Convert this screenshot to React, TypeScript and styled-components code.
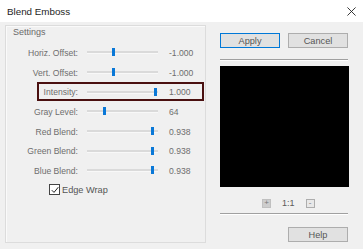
import React from "react";
import styled, { createGlobalStyle } from "styled-components";

const GlobalStyle = createGlobalStyle`
  html, body {
    margin: 0;
    padding: 0;
    background: #f0f0f0;
  }
  body {
    font-family: "Liberation Sans", Arial, sans-serif;
  }
`;

const Window = styled.div`
  width: 363px;
  height: 249px;
  background: #f0f0f0;
  overflow: hidden;
`;

const TitleBar = styled.div`
  height: 22px;
  background: #ffffff;
  display: flex;
  align-items: center;
  justify-content: space-between;
  padding: 0 7px;
  font-size: 9.8px;
  color: #1e1e1e;
`;

const CloseIcon = styled.svg`
  width: 9px;
  height: 9px;
`;

const Body = styled.div`
  display: flex;
  align-items: flex-start;
  padding-left: 5px;
`;

const GroupBox = styled.div`
  margin-top: 3px;
  width: 199px;
  height: 216px;
  border: 1px solid #dcdcdc;
  box-shadow: inset 1px 1px 0 #fafafa;
`;

const Caption = styled.div`
  width: fit-content;
  margin: 1px 0 0 6px;
  padding: 0 1px;
  font-size: 9px;
  color: #6a6a6a;
`;

const Rows = styled.div`
  margin-top: 6px;
  display: flex;
  flex-direction: column;
`;

const Row = styled.div<{ $highlight?: boolean }>`
  position: relative;
  height: 19.7px;
  display: grid;
  grid-template-columns: 72px 80px 1fr;
  align-items: center;
  font-size: 8.6px;
  color: #6e6e6e;

  ${(p) =>
    p.$highlight &&
    `
    &::after {
      content: "";
      position: absolute;
      left: 31px;
      right: 1px;
      top: 0;
      bottom: 1px;
      border: 2px solid #4a1010;
    }
  `}
`;

const Label = styled.span`
  text-align: right;
  white-space: nowrap;
`;

const Track = styled.div`
  position: relative;
  margin-left: 9px;
  width: 71px;
  height: 2px;
  background: #dadada;
  border-bottom: 1px solid #f8f8f8;
`;

const Thumb = styled.div`
  position: absolute;
  top: -3px;
  width: 3px;
  height: 8px;
  background: #0a78d7;
`;

const Value = styled.span`
  padding-left: 11px;
`;

const CheckRow = styled.label`
  display: flex;
  align-items: center;
  gap: 2px;
  height: 18px;
  margin-left: 43px;
  font-size: 9.2px;
  color: #555;
`;

const Box = styled.span`
  width: 9px;
  height: 9px;
  border: 1px solid #444;
  background: #fff;
  display: flex;
  align-items: center;
  justify-content: center;
`;

const Side = styled.div`
  margin-left: 14px;
  padding-top: 11px;
  width: 129px;
  display: flex;
  flex-direction: column;
`;

const ButtonRow = styled.div`
  display: flex;
  gap: 8px;
`;

const Button = styled.button<{ $default?: boolean }>`
  width: 60px;
  height: 15px;
  padding: 0;
  font-family: inherit;
  font-size: 9.2px;
  color: #555;
  background: #e1e1e1;
  border: 1px solid ${(p) => (p.$default ? "#0078d7" : "#adadad")};
`;

const Separator = styled.div<{ $top: number; $width: number }>`
  margin-top: ${(p) => p.$top}px;
  width: ${(p) => p.$width}px;
  height: 1px;
  background: #a0a0a0;
  border-bottom: 1px solid #ffffff;
`;

const Preview = styled.div`
  margin-top: 5px;
  height: 121px;
  background: #000;
`;

const ZoomRow = styled.div`
  margin-top: 11px;
  margin-left: 42px;
  display: flex;
  align-items: center;
  gap: 11px;
  font-size: 9px;
  color: #5a5a5a;
`;

const ZoomButton = styled.span<{ $filled?: boolean }>`
  width: 9px;
  height: 9px;
  box-sizing: border-box;
  display: flex;
  align-items: center;
  justify-content: center;
  font-size: 8px;
  line-height: 1;
  color: #777;
  background: ${(p) => (p.$filled ? "#cdcdcd" : "#e8e8e8")};
  border: 1px solid ${(p) => (p.$filled ? "#c0c0c0" : "#adadad")};
`;

const HelpRow = styled.div`
  margin-top: 12px;
  display: flex;
  justify-content: flex-end;
  padding-right: 1px;
`;

type Setting = {
  label: string;
  value: string;
  pos: number;
  highlight?: boolean;
};

const settings: Setting[] = [
  { label: "Horiz. Offset:", value: "-1.000", pos: 0.38 },
  { label: "Vert. Offset:", value: "-1.000", pos: 0.38 },
  { label: "Intensity:", value: "1.000", pos: 0.96, highlight: true },
  { label: "Gray Level:", value: "64", pos: 0.25 },
  { label: "Red Blend:", value: "0.938", pos: 0.92 },
  { label: "Green Blend:", value: "0.938", pos: 0.92 },
  { label: "Blue Blend:", value: "0.938", pos: 0.92 },
];

const App = () => {
  return (
    <Window>
      <GlobalStyle />
      <TitleBar>
        <span>Blend Emboss</span>
        <CloseIcon viewBox="0 0 10 10">
          <path d="M0.5 0.5 L9.5 9.5 M9.5 0.5 L0.5 9.5" stroke="#222" strokeWidth="1" />
        </CloseIcon>
      </TitleBar>
      <Body>
        <GroupBox>
          <Caption>Settings</Caption>
          <Rows>
            {settings.map((s) => (
              <Row key={s.label} $highlight={s.highlight}>
                <Label>{s.label}</Label>
                <Track>
                  <Thumb style={{ left: `${s.pos * 71 - 1.5}px` }} />
                </Track>
                <Value>{s.value}</Value>
              </Row>
            ))}
            <CheckRow>
              <Box>
                <svg width="8" height="8" viewBox="0 0 8 8">
                  <path d="M0.8 4.2 L3 6.4 L7.3 1.2" fill="none" stroke="#222" strokeWidth="1" />
                </svg>
              </Box>
              Edge Wrap
            </CheckRow>
          </Rows>
        </GroupBox>
        <Side>
          <ButtonRow>
            <Button $default>Apply</Button>
            <Button>Cancel</Button>
          </ButtonRow>
          <Separator $top={11} $width={128} />
          <Preview />
          <ZoomRow>
            <ZoomButton $filled>+</ZoomButton>
            <span>1:1</span>
            <ZoomButton>-</ZoomButton>
          </ZoomRow>
          <Separator $top={5} $width={128} />
          <HelpRow>
            <Button>Help</Button>
          </HelpRow>
        </Side>
      </Body>
    </Window>
  );
};

export default App;
